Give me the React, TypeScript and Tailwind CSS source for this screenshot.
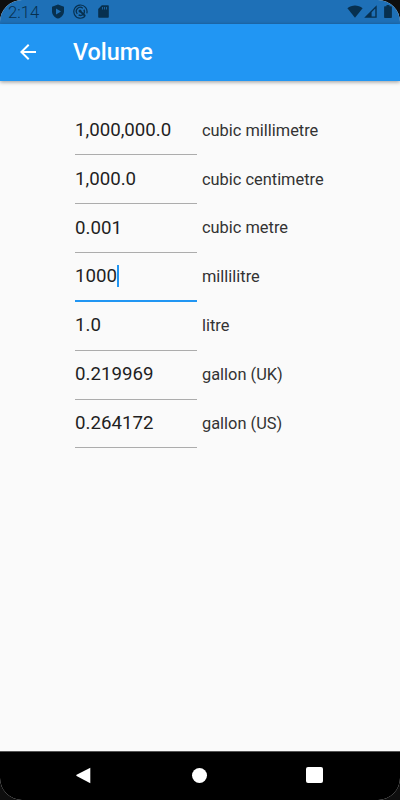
import { useState } from 'react';

type Unit = { id: string; label: string; value: string };

const UNITS: Unit[] = [
  { id: 'mm3', label: 'cubic millimetre', value: '1,000,000.0' },
  { id: 'cm3', label: 'cubic centimetre', value: '1,000.0' },
  { id: 'm3', label: 'cubic metre', value: '0.001' },
  { id: 'ml', label: 'millilitre', value: '1000' },
  { id: 'l', label: 'litre', value: '1.0' },
  { id: 'galUk', label: 'gallon (UK)', value: '0.219969' },
  { id: 'galUs', label: 'gallon (US)', value: '0.264172' },
];

export default function App() {
  const [active, setActive] = useState('ml');

  return (
    <div className="w-[400px] h-[800px] bg-[#0e0e0e] font-[Roboto,sans-serif]">
      <div className="w-full h-full flex flex-col overflow-hidden rounded-[22px] bg-[#fafafa]">
        <StatusBar />
        <AppBar title="Volume" />

        <main className="flex-1 pl-[75px] pt-[26px]">
          {UNITS.map((unit) => (
            <UnitRow
              key={unit.id}
              unit={unit}
              active={unit.id === active}
              onSelect={() => setActive(unit.id)}
            />
          ))}
        </main>

        <NavBar />
      </div>
    </div>
  );
}

// --- Subcomponents ---

function StatusBar() {
  return (
    <div className="h-[23.5px] shrink-0 flex items-center bg-[#1e70b7] text-[#07304f] pl-2 pr-[8px]">
      <span className="w-[43px] text-[16.7px] leading-none font-light text-[#07304f] pt-[3px]">2:14</span>
      <svg className="w-[14px] h-[15px]" viewBox="0 0 14 15">
        <path
          fill="currentColor"
          fillRule="evenodd"
          d="M7 .4 1 2.7v4.5c0 3.4 2.4 6.2 6 7.4 3.6-1.2 6-4 6-7.4V2.7zM5 4.6l5 2.9-5 2.9z"
        />
      </svg>
      <svg className="w-[15px] h-[15px] ml-2" viewBox="0 0 15 15" fill="none" stroke="currentColor">
        <path strokeWidth="1.2" d="M12.1 12.3A6.6 6.6 0 1 1 13.8 9.4" />
        <path strokeWidth="1.3" d="M4.3 9.8A3.9 3.9 0 0 1 9.8 4.3M10.9 5.6a3.9 3.9 0 0 1-5.3 5.3" />
        <path strokeWidth="1.8" d="m6.6 6.6 5.6 5.4" />
        <circle cx="7" cy="7" r="1.5" fill="currentColor" stroke="none" />
      </svg>
      <svg className="w-[11px] h-[13px] ml-[10px]" viewBox="0 0 11 13">
        <path
          fill="currentColor"
          fillRule="evenodd"
          d="M3.8.3h6c.6 0 1 .4 1 1v10.4c0 .6-.4 1-1 1H1.2c-.6 0-1-.4-1-1V4zM4 2v2.4h.8V2zm2.1 0v2.4h.8V2zm2.1 0v2.4H9V2z"
        />
      </svg>
      <svg className="w-[16px] h-[13px] ml-auto" viewBox="0 0 16 13">
        <path fill="currentColor" d="M.4 3.2C4.8-.3 11.2-.3 15.6 3.2L8 12.7z" />
      </svg>
      <svg className="w-[13px] h-[13px] ml-[1px]" viewBox="0 0 13 13">
        <path fill="currentColor" fillRule="evenodd" d="M12.7.2v12.5H.2zM11.3 3.6 7.6 7.3v4.1h3.7z" />
      </svg>
      <svg className="w-[8px] h-[13px] ml-[7px]" viewBox="0 0 8 13">
        <path fill="currentColor" d="M2.5 0h3v1.2h1.7c.4 0 .7.3.7.7v10.4c0 .4-.3.7-.7.7H.8c-.4 0-.7-.3-.7-.7V1.9c0-.4.3-.7.7-.7h1.7z" />
      </svg>
    </div>
  );
}

function AppBar({ title }: { title: string }) {
  return (
    <header className="h-[57px] shrink-0 flex items-center bg-[#2196f3] text-white pl-5 shadow-[0_1px_4px_rgba(0,0,0,0.4)]">
      <button aria-label="Back" className="w-[53px]">
        <svg className="w-4 h-4" viewBox="0 0 16 16">
          <path fill="currentColor" d="M16 7H3.8l5.6-5.6L8 0 0 8l8 8 1.4-1.4L3.8 9H16z" />
        </svg>
      </button>
      <h1 className="text-[23.4px] leading-none font-medium pt-[2px]">{title}</h1>
    </header>
  );
}

function UnitRow({ unit, active, onSelect }: { unit: Unit; active: boolean; onSelect: () => void }) {
  return (
    <div className="h-[48.85px] flex" onClick={onSelect}>
      <div
        className={`w-[122px] flex items-center border-b ${
          active ? 'border-b-2 border-[#2196f3]' : 'border-[#acacac]'
        }`}
      >
        <span className="text-[18.7px] leading-none text-[#1f1f1f]">{unit.value}</span>
        {active && <span className="w-[2px] h-[22px] bg-[#2196f3]" />}
      </div>
      <span className="pl-[5px] self-center text-[16.4px] leading-none text-[#333333]">{unit.label}</span>
    </div>
  );
}

function NavBar() {
  return (
    <nav className="h-[49px] shrink-0 flex items-center justify-between bg-black border-t border-[#555555] text-white pl-[76px] pr-[77px] pb-[2px]">
      <svg className="w-[17px] h-[17px]" viewBox="0 0 17 17">
        <path fill="currentColor" d="M14.3.8v15.4L.6 8.9c-.5-.3-.5-.8 0-1.1z" />
      </svg>
      <div className="w-[15px] h-[15px] rounded-full bg-white" />
      <div className="w-[17px] h-4 rounded-[2px] bg-white" />
    </nav>
  );
}
